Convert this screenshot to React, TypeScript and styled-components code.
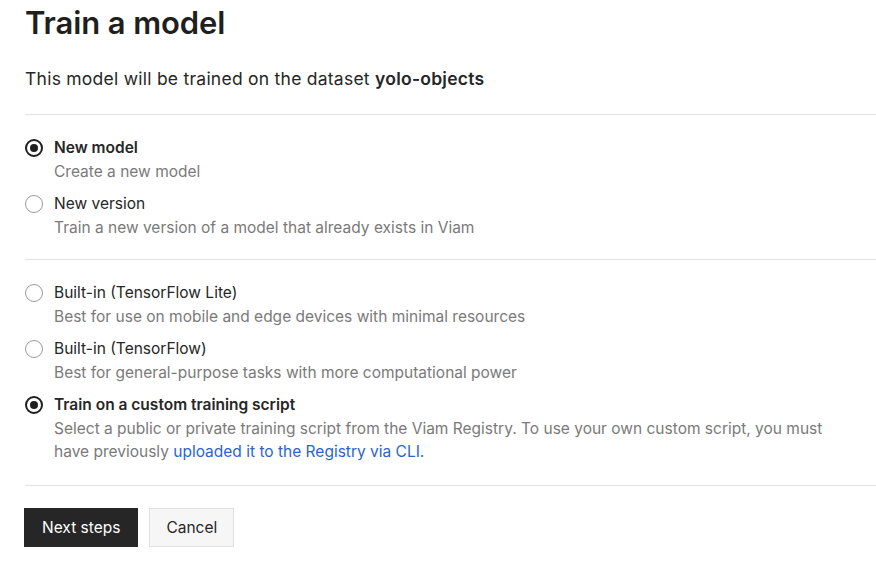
import styled, { createGlobalStyle } from "styled-components";
import { useState } from "react";

const GlobalStyle = createGlobalStyle`
  html, body {
    margin: 0;
    padding: 0;
    background: #ffffff;
  }
  body {
    font-family: "Inter", "Noto Sans", sans-serif;
    color: #262626;
  }
`;

const Page = styled.div`
  padding: 0 0 0 25px;
  width: 851px;
`;

const Title = styled.h1`
  margin: 0;
  padding-top: 3px;
  font-size: 31px;
  line-height: 40px;
  font-weight: 600;
  letter-spacing: -0.1px;
  color: #1f1f1f;
`;

const Subtitle = styled.p`
  margin: 24px 0 23px;
  font-size: 17.5px;
  line-height: 24px;
  letter-spacing: 0.25px;
  color: #262626;

  b {
    font-weight: 600;
  }
`;

const Divider = styled.hr`
  margin: 0;
  border: 0;
  border-top: 1px solid #e3e3e3;
`;

const Group = styled.div<{ $tail?: number }>`
  display: flex;
  flex-direction: column;
  gap: 9px;
  padding: 21px 0 ${(p) => p.$tail ?? 20}px;
`;

const Option = styled.label`
  display: grid;
  grid-template-columns: 18px 1fr;
  column-gap: 11px;
  cursor: pointer;
`;

const Radio = styled.span<{ $checked: boolean }>`
  width: 18px;
  height: 18px;
  margin-top: 3px;
  box-sizing: border-box;
  border-radius: 50%;
  border: ${(p) => (p.$checked ? "2px solid #1f1f1f" : "1.5px solid #9a9a9a")};
  display: flex;
  align-items: center;
  justify-content: center;

  &::after {
    content: "";
    width: 8px;
    height: 8px;
    border-radius: 50%;
    background: #1f1f1f;
    display: ${(p) => (p.$checked ? "block" : "none")};
  }
`;

const Label = styled.div<{ $checked: boolean }>`
  font-size: 15.5px;
  line-height: 24px;
  font-weight: ${(p) => (p.$checked ? 600 : 400)};
  color: #262626;
`;

const Desc = styled.div`
  grid-column: 2;
  font-size: 15.5px;
  line-height: 23px;
  color: #7a7a7a;
  padding-right: 40px;

  a {
    color: #2a63d4;
    text-decoration: none;
  }
`;

const Actions = styled.div`
  display: flex;
  gap: 11px;
  padding-top: 22px;
  margin-left: -1px;
`;

const Button = styled.button<{ $primary?: boolean }>`
  height: 39px;
  padding: 0 ${(p) => (p.$primary ? 17 : 16)}px;
  font-family: inherit;
  font-size: 15.5px;
  border-radius: 0;
  cursor: pointer;
  background: ${(p) => (p.$primary ? "#262626" : "#f6f6f6")};
  color: ${(p) => (p.$primary ? "#ffffff" : "#262626")};
  border: 1px solid ${(p) => (p.$primary ? "#262626" : "#e0e0e0")};
`;

type Item = { id: string; label: string; desc: React.ReactNode };

const modelTypes: Item[] = [
  { id: "new", label: "New model", desc: "Create a new model" },
  {
    id: "version",
    label: "New version",
    desc: "Train a new version of a model that already exists in Viam",
  },
];

const frameworks: Item[] = [
  {
    id: "tflite",
    label: "Built-in (TensorFlow Lite)",
    desc: "Best for use on mobile and edge devices with minimal resources",
  },
  {
    id: "tf",
    label: "Built-in (TensorFlow)",
    desc: "Best for general-purpose tasks with more computational power",
  },
  {
    id: "custom",
    label: "Train on a custom training script",
    desc: (
      <>
        Select a public or private training script from the Viam Registry. To
        use your own custom script, you must have previously{" "}
        <a href="#">uploaded it to the Registry via CLI.</a>
      </>
    ),
  },
];

function RadioGroup({
  items,
  value,
  onChange,
  tail,
}: {
  items: Item[];
  value: string;
  onChange: (v: string) => void;
  tail?: number;
}) {
  return (
    <Group $tail={tail}>
      {items.map((it) => (
        <Option key={it.id} onClick={() => onChange(it.id)}>
          <Radio $checked={value === it.id} />
          <Label $checked={value === it.id}>{it.label}</Label>
          <Desc>{it.desc}</Desc>
        </Option>
      ))}
    </Group>
  );
}

export default function App() {
  const [kind, setKind] = useState("new");
  const [framework, setFramework] = useState("custom");

  return (
    <>
      <GlobalStyle />
      <Page>
        <Title>Train a model</Title>
        <Subtitle>
          This model will be trained on the dataset <b>yolo-objects</b>
        </Subtitle>
        <Divider />
        <RadioGroup items={modelTypes} value={kind} onChange={setKind} />
        <Divider />
        <RadioGroup
          items={frameworks}
          value={framework}
          onChange={setFramework}
          tail={22}
        />
        <Divider />
        <Actions>
          <Button $primary>Next steps</Button>
          <Button>Cancel</Button>
        </Actions>
      </Page>
    </>
  );
}
